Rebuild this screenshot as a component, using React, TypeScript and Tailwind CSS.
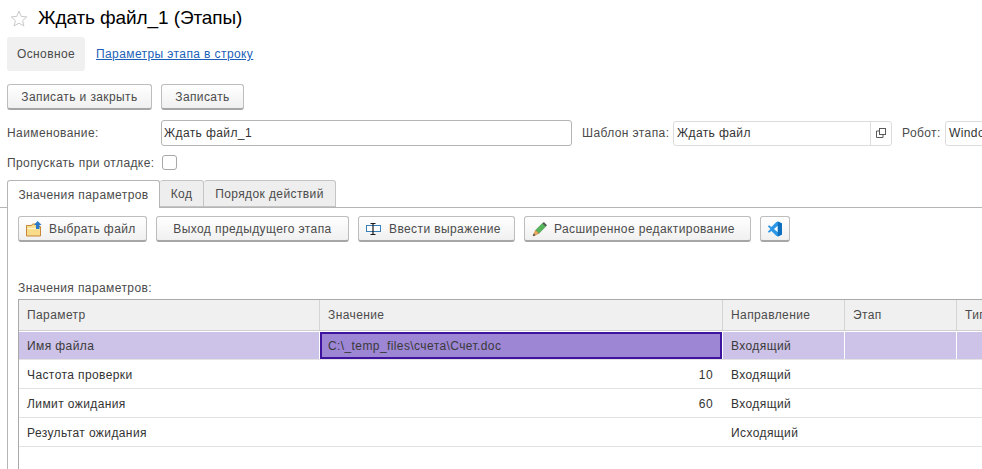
import React from "react";

const font = { fontFamily: '"Liberation Sans", Arial, sans-serif' };

const Btn = ({ w, icon, children }: { w: string; icon?: boolean; children: React.ReactNode }) => (
  <div
    className={`${w} ${
      icon ? "justify-start pl-[7px] gap-[7px]" : "justify-center"
    } h-[26px] shrink-0 flex items-center whitespace-nowrap rounded-[3px] border border-[#bdbdbd] border-b-[2px] border-b-[#a6a6a6] bg-gradient-to-b from-white to-[#f0f0f0] text-[#4b4b4b]`}
  >
    {children}
  </div>
);

const StarIcon = () => (
  <svg width="18" height="17" viewBox="0 0 18 17" fill="none">
    <path
      d="M9 1.2 11.2 6.4 16.8 6.9 12.6 10.6 13.9 16 9 13.1 4.1 16 5.4 10.6 1.2 6.9 6.8 6.4Z"
      stroke="#c9c9c9"
      strokeWidth="1"
    />
  </svg>
);

const FolderIcon = () => (
  <svg width="16" height="16" viewBox="0 0 16 16" fill="none">
    <path d="M.5 15V4.5h5l1-1.5h4v2.5h4V15Z" fill="#f8dc8a" stroke="#c8863a" />
    <path d="M1.5 7.5h12.5" stroke="#fdf3cf" strokeWidth="1.5" />
    <path d="M10 8V4H8l3.6-4L15.6 4h-2.1v4Z" fill="#2b78c8" />
  </svg>
);

const ExprIcon = () => (
  <svg width="16" height="16" viewBox="0 0 16 16" fill="none">
    <rect x="0.5" y="4.5" width="14" height="6" fill="#fff" stroke="#3a7fb8" />
    <path d="M4.5 2.5h5M4.5 13.5h5M7 2.5v11" stroke="#1a1a1a" strokeWidth="1.2" />
  </svg>
);

const PencilIcon = () => (
  <svg width="15" height="16" viewBox="0 0 15 16" fill="none">
    <path d="M3.6 9.2 10.4 2.4 13.6 5.6 6.8 12.4Z" fill="#56b45a" stroke="#3b8f42" strokeWidth="0.6" />
    <path d="M10.4 2.4 11.8 1l3.2 3.2-1.4 1.4Z" fill="#4f5a52" />
    <path d="M3.6 9.2 6.8 12.4 1 15Z" fill="#eda95c" stroke="#b9772f" strokeWidth="0.5" />
    <path d="M1 15 1.8 12.6 3.4 14.2Z" fill="#3a3a3a" />
  </svg>
);

const VsCodeIcon = () => (
  <svg width="16" height="16" viewBox="0 0 16 16" fill="none">
    <path d="M10.8.6 15 2.6v10.8l-4.2 2-1.6-.6L4.4 10 2 11.8.8 10.8 3.4 8 .8 5.2 2 4.2 4.4 6l4.8-4.8Z" fill="#2b97e6" />
    <path d="M10.8 4.8 7 8l3.8 3.2Z" fill="#fff" />
    <path d="M10.8.6 15 2.6v10.8l-4.2 2Z" fill="#0e6fbe" />
  </svg>
);

const CopyIcon = () => (
  <svg width="10" height="10" viewBox="0 0 10 10" fill="none">
    <rect x="3.5" y="0.5" width="6" height="6" stroke="#5a5a5a" />
    <path d="M3.5 3H.5v6.5H7V6.5" stroke="#5a5a5a" />
  </svg>
);

const rows = [
  { name: "Частота проверки", value: "10", dir: "Входящий" },
  { name: "Лимит ожидания", value: "60", dir: "Входящий" },
  { name: "Результат ожидания", value: "", dir: "Исходящий" },
];

const cols = "grid grid-cols-[300px_1px_402px_1px_121px_1px_111px_1px_60px]";

export default function App() {
  return (
    <div style={font} className="w-[982px] h-[469px] overflow-hidden bg-white text-[12px] text-[#4b4b4b] tracking-[0.4px]">
      {/* заголовок */}
      <div className="h-[37px] flex items-center pl-[10px] pb-[1px]">
        <StarIcon />
        <span className="ml-[10px] text-[19px] text-black tracking-[-0.1px]">Ждать файл_1 (Этапы)</span>
      </div>

      {/* навигация */}
      <div className="flex items-center pl-[7px] h-[34px]">
        <div className="w-[78px] h-[34px] flex items-center justify-center rounded-[3px] bg-[#f0f0f0]">Основное</div>
        <a className="ml-[11px] text-[#1c5fb8] underline">Параметры этапа в строку</a>
      </div>

      {/* команды */}
      <div className="flex gap-[9px] pl-[7px] mt-[13px]">
        <Btn w="w-[145px]">Записать и закрыть</Btn>
        <Btn w="w-[83px]">Записать</Btn>
      </div>

      {/* реквизиты */}
      <div className="flex items-center pl-[7px] mt-[10px] h-[26px] whitespace-nowrap">
        <span className="w-[154px] shrink-0">Наименование:</span>
        <div className="w-[411px] shrink-0 h-[26px] flex items-center pl-[2px] rounded-[3px] border border-[#b5b5b5] text-[#333]">
          Ждать файл_1
        </div>
        <span className="ml-[10px] w-[91px] shrink-0">Шаблон этапа:</span>
        <div className="w-[219px] shrink-0 h-[25px] flex items-center pl-[3px] rounded-[3px] border border-[#dcdcdc] text-[#333]">
          <span className="flex-1">Ждать файл</span>
          <div className="w-[21px] h-full flex items-center justify-center border-l border-[#dcdcdc]">
            <CopyIcon />
          </div>
        </div>
        <span className="ml-[10px] w-[43px] shrink-0">Робот:</span>
        <div className="w-[60px] shrink-0 h-[25px] flex items-center pl-[3px] rounded-[3px] border border-[#dcdcdc] text-[#333]">
          Windows
        </div>
      </div>

      <div className="flex items-center pl-[7px] mt-[9px] h-[15px] whitespace-nowrap">
        <span className="w-[155px] shrink-0">Пропускать при отладке:</span>
        <div className="w-[15px] h-[15px] rounded-[3px] border border-[#a8a8a8]" />
      </div>

      {/* вкладки */}
      <div className="flex pl-[7px] mt-[10px] h-[28px] border-b border-[#b5b5b5] text-[#4b4b4b] whitespace-nowrap">
        <div className="w-[153px] h-[28px] flex items-center justify-center rounded-t-[3px] border border-b-0 border-[#b5b5b5] bg-white relative z-10">
          Значения параметров
        </div>
        <div className="w-[44px] h-[27px] flex items-center justify-center rounded-t-[3px] border border-l-0 border-[#c4c4c4] bg-[#eeeeee]">Код</div>
        <div className="w-[132px] h-[27px] flex items-center justify-center rounded-t-[3px] border border-l-0 border-[#c4c4c4] bg-[#eeeeee]">Порядок действий</div>
      </div>

      {/* панель вкладки */}
      <div className="ml-[7px] border-l border-[#b5b5b5] pl-[10px] pt-[8px] h-[262px]">
        <div className="flex gap-[9px]">
          <Btn w="w-[129px]" icon>
            <FolderIcon />
            <span>Выбрать файл</span>
          </Btn>
          <Btn w="w-[193px]">Выход предыдущего этапа</Btn>
          <Btn w="w-[157px]" icon>
            <ExprIcon />
            <span>Ввести выражение</span>
          </Btn>
          <Btn w="w-[227px]" icon>
            <PencilIcon />
            <span>Расширенное редактирование</span>
          </Btn>
          <Btn w="w-[30px]">
            <VsCodeIcon />
          </Btn>
        </div>

        <div className="mt-[39px] h-[14px] leading-[14px]">Значения параметров:</div>

        {/* таблица */}
        <div className="mt-[4px] w-[1000px] h-[180px] border-l border-t border-[#a9a9a9]">
          <div className={`${cols} h-[31px] bg-[#f0f0f0] border-b border-[#cfcfcf]`}>
            <div className="pl-[8px] flex items-center">Параметр</div>
            <div className="bg-[#d4d4d4]" />
            <div className="pl-[8px] flex items-center">Значение</div>
            <div className="bg-[#d4d4d4]" />
            <div className="pl-[8px] flex items-center">Направление</div>
            <div className="bg-[#d4d4d4]" />
            <div className="pl-[8px] flex items-center">Этап</div>
            <div className="bg-[#d4d4d4]" />
            <div className="pl-[8px] flex items-center">Тип</div>
          </div>
          <div className={`${cols} h-[29px] pt-[1px] border-b border-[#e3e3e3] bg-white text-[#3a3a3a]`}>
            <div className="pl-[8px] flex items-center bg-[#cdc2e8]">Имя файла</div>
            <div />
            <div className="pl-[6px] flex items-center bg-[#9d86d4] border-[2px] border-[#3e13a0]">
              C:\_temp_files\счета\Счет.doc
            </div>
            <div />
            <div className="pl-[8px] flex items-center bg-[#cdc2e8]">Входящий</div>
            <div />
            <div className="bg-[#cdc2e8]" />
            <div />
            <div className="bg-[#cdc2e8]" />
          </div>
          {rows.map((row) => (
            <div key={row.name} className={`${cols} h-[29px] pt-[1px] border-b border-[#e3e3e3] text-[#333]`}>
              <div className="pl-[8px] flex items-center">{row.name}</div>
              <div />
              <div className="pr-[9px] flex items-center justify-end">{row.value}</div>
              <div />
              <div className="pl-[8px] flex items-center">{row.dir}</div>
            </div>
          ))}
        </div>
      </div>
    </div>
  );
}
